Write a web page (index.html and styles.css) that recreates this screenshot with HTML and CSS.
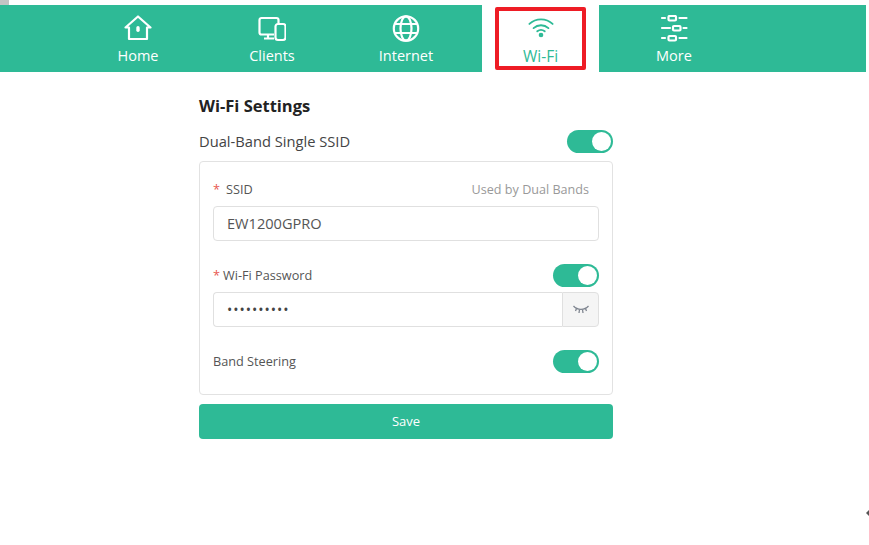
FILE: index.html
```html
<!DOCTYPE html>
<html lang="en">
<head>
    <meta charset="UTF-8">
    <meta name="viewport" content="width=device-width, initial-scale=1.0">
    <title>Wi-Fi Settings</title>
    <link rel="stylesheet" href="styles.css">
</head>
<body>
    <div class="corner"></div>
    <nav class="nav">
        <div class="nav-group nav-left">
            <a class="nav-item">
                <svg class="nav-icon" viewBox="0 0 28 28" fill="none" stroke="currentColor" stroke-width="2.2">
                    <path d="M1.500 12.500 14 1.500l12.500 11H23V24H5V12.500Z" stroke-linejoin="round"/>
                    <rect x="12.300" y="11" width="3.400" height="6" rx="1.700" fill="currentColor" stroke="none"/>
                </svg>
                <span>Home</span>
            </a>
            <a class="nav-item">
                <svg class="nav-icon" viewBox="0 0 28 28" fill="none" stroke="currentColor" stroke-width="2.2">
                    <path d="M16 19.500H3.500a2 2 0 0 1-2-2V5a2 2 0 0 1 2-2h15a2 2 0 0 1 2 2v3"/>
                    <path d="M10 20v3.500M6 23.500h10"/>
                    <rect x="17.500" y="9" width="10" height="16" rx="2.500"/>
                </svg>
                <span>Clients</span>
            </a>
            <a class="nav-item">
                <svg class="nav-icon" viewBox="0 0 28 28" fill="none" stroke="currentColor" stroke-width="2.2">
                    <circle cx="14" cy="13.500" r="12.200"/>
                    <ellipse cx="14" cy="13.500" rx="5.500" ry="12.200"/>
                    <path d="M2.500 9h23M2.500 18h23"/>
                </svg>
                <span>Internet</span>
            </a>
        </div>
        <div class="nav-current">
            <a class="nav-item nav-item-active">
                <svg class="nav-icon" viewBox="0 0 28 28" fill="none" stroke="currentColor" stroke-width="2" stroke-linecap="round">
                    <path d="M1.500 8.500c7-6.500 18-6.500 25 0"/>
                    <path d="M6 13c4.500-4 11.500-4 16 0"/>
                    <path d="M10 16.500c2.500-2 5.500-2 8 0"/>
                    <circle cx="14" cy="20.500" r="2.500" fill="currentColor" stroke="none"/>
                </svg>
                <span>Wi-Fi</span>
            </a>
        </div>
        <div class="nav-group nav-right">
            <a class="nav-item">
                <svg class="nav-icon" viewBox="0 0 28 28" fill="none" stroke="currentColor" stroke-width="2.200" stroke-linecap="round">
                    <path d="M2 3h3M19.500 3H26.500M2 13h8M23.500 13h3M2 23h3M19.500 23H26.500"/>
                    <rect x="8.500" y="1" width="7.500" height="4.500" rx="1"/>
                    <rect x="13" y="11" width="7.500" height="4.500" rx="1"/>
                    <rect x="8.500" y="21" width="7.500" height="4.500" rx="1"/>
                </svg>
                <span>More</span>
            </a>
        </div>
    </nav>

    <main class="settings">
        <h1 class="settings-title">Wi-Fi Settings</h1>
        <div class="row row-top">
            <span class="row-label">Dual-Band Single SSID</span>
            <span class="toggle"></span>
        </div>
        <div class="panel">
            <div class="row field-head field-ssid">
                <label class="field-label"><span class="req req-gap">*</span>SSID</label>
                <span class="hint">Used by Dual Bands</span>
            </div>
            <div class="input">EW1200GPRO</div>
            <div class="row field-head field-pass">
                <label class="field-label"><span class="req">*</span>Wi-Fi Password</label>
                <span class="toggle"></span>
            </div>
            <div class="input-group">
                <div class="input input-pass">••••••••••</div>
                <span class="addon">
                    <svg viewBox="0 0 16 10" width="16" height="10" fill="none" stroke="#7f8590" stroke-width="1.300">
                        <path d="M.5 1c4 4.500 11 4.500 15 0"/>
                        <path d="M3.500 3.500 2.500 6M6.500 4.500 6 8M9.500 4.500l.5 3.500M12.500 3.500l1 2.500"/>
                    </svg>
                </span>
            </div>
            <div class="row field-band">
                <label class="field-label">Band Steering</label>
                <span class="toggle"></span>
            </div>
        </div>
        <button class="save">Save</button>
    </main>

    <div class="edge-caret"></div>
</body>
</html>
```

FILE: styles.css
```css
body {
    margin: 0;
    font-family: "Open Sans", "Noto Sans", sans-serif;
    color: #444;
    background-color: #fff;
}
.corner {
    position: absolute;
    top: 0;
    left: 0;
    width: 9px;
    height: 5px;
    background-color: #c4c4c4;
}
.nav {
    display: flex;
    height: 67px;
    padding-top: 5px;
    margin-right: 3px;
}
.nav-group {
    display: flex;
    background-color: #2eba96;
}
.nav-left {
    width: 482px;
    padding-left: 71px;
    box-sizing: border-box;
}
.nav-right {
    flex: 1;
    padding-left: 8px;
}
.nav-current {
    width: 117px;
    display: flex;
    justify-content: center;
    align-items: center;
}
.nav-item {
    width: 134px;
    display: flex;
    flex-direction: column;
    align-items: center;
    padding-top: 10px;
    box-sizing: border-box;
    color: #fff;
    font-size: 14.500px;
    line-height: 20px;
}
.nav-icon {
    width: 28px;
    height: 28px;
    margin-bottom: 3px;
}
.nav-item-active {
    width: 91px;
    height: 63px;
    padding-top: 5px;
    border: 4px solid #ee1c25;
    border-radius: 2px;
    color: #2eba96;
    font-size: 15.500px;
}
.nav-item-active .nav-icon {
    margin-bottom: 4px;
}
.settings {
    width: 414px;
    margin-left: 199px;
}
.settings-title {
    margin: 24px 0 0;
    font-size: 16.500px;
    line-height: 20px;
    font-weight: 700;
    color: #222;
}
.row {
    display: flex;
    justify-content: space-between;
    align-items: center;
}
.row-top {
    height: 24px;
    margin-top: 13px;
}
.row-label {
    font-size: 14.700px;
}
.toggle {
    position: relative;
    display: block;
    width: 46px;
    height: 23px;
    border-radius: 12px;
    background-color: #2eba96;
}
.toggle::after {
    content: "";
    position: absolute;
    top: 2px;
    right: 2px;
    width: 19px;
    height: 19px;
    border-radius: 50%;
    background-color: #fff;
}
.panel {
    box-sizing: border-box;
    height: 234px;
    margin-top: 8px;
    padding: 0 13px;
    border: 1px solid #e2e2e2;
    border-radius: 4px;
}
.field-head {
    height: 24px;
}
.field-ssid {
    margin-top: 15px;
    margin-bottom: 5px;
    padding-right: 10px;
}
.field-pass {
    margin-top: 22px;
    margin-bottom: 5px;
}
.field-band {
    height: 24px;
    margin-top: 22px;
}
.field-label {
    font-size: 12.700px;
    color: #555;
}
.req {
    color: #e8584f;
    margin-right: 3px;
}
.req-gap {
    margin-right: 6px;
}
.hint {
    font-size: 12.600px;
    color: #999;
}
.input {
    box-sizing: border-box;
    height: 35px;
    padding: 0 13px;
    line-height: 32px;
    font-size: 14.600px;
    border: 1px solid #e0e0e0;
    border-radius: 4px;
    color: #555;
}
.input-group {
    display: flex;
}
.input-pass {
    flex: 1;
    border-radius: 4px 0 0 4px;
    border-right: none;
    letter-spacing: 1px;
    font-size: 14px;
    line-height: 33px;
    color: #444;
}
.addon {
    width: 37px;
    height: 35px;
    box-sizing: border-box;
    display: flex;
    align-items: center;
    justify-content: center;
    background-color: #f5f5f5;
    border: 1px solid #e0e0e0;
    border-radius: 0 4px 4px 0;
}
.save {
    display: block;
    width: 100%;
    height: 35px;
    margin-top: 9px;
    padding-bottom: 3px;
    border: none;
    border-radius: 4px;
    background-color: #2eba96;
    color: #fff;
    font-family: inherit;
    font-size: 13px;
}
.edge-caret {
    position: absolute;
    top: 510px;
    left: 866px;
    border-top: 3px solid transparent;
    border-bottom: 3px solid transparent;
    border-right: 3px solid #555;
}
```
